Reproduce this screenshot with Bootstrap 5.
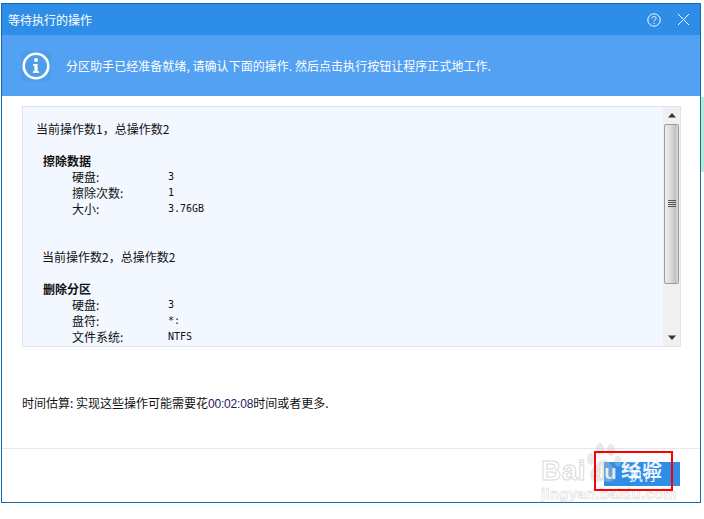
<!DOCTYPE html>
<html lang="zh">
<head>
<meta charset="utf-8">
<title>等待执行的操作</title>
<link href="https://cdn.jsdelivr.net/npm/bootstrap@5.3.0/dist/css/bootstrap.min.css" rel="stylesheet">
<style>
html,body{height:100%;background:#fff;overflow:hidden}
body{padding:3px 3px 0 1px;font:12px/16px "Noto Sans CJK SC","Liberation Sans",sans-serif;color:#111}
.win{width:700px;height:500px;border:1px solid #0f6cb5;background:#fff;position:relative}
.titlebar{height:31px;background:#2e8de6;color:#fff;padding:0 10px 0 6px}
.ttl{font-size:12px}
.tb-ico{display:block}
.banner{height:61px;background:#52a1f2;color:#fff;padding:0 0 0 19px;gap:15px}
.banner svg{flex:none}
.banner-text{font-size:12px;letter-spacing:.04px}
.logbox{margin:10px 19px 0 20px;height:241px;border:1px solid #dfe3ee;background:#f3f7ff;overflow:hidden}
.logtext{padding:14px 0 0 13px;overflow:hidden;min-width:0;height:100%}
.ln{height:16px;line-height:16px;white-space:nowrap}
.ln b{font-weight:700}
.sp1{height:16px}
.sp2{height:32px}
.h-row{padding-left:7px}
.k{display:inline-block;box-sizing:content-box;padding-left:36px;width:96px;vertical-align:top}
.v{display:inline-block;font:10px/16px "DejaVu Sans Mono","Liberation Mono",monospace;vertical-align:top}
.sec2{padding-left:6px}
.sbar{width:17px;flex:none;background:#f0f0f0;height:100%}
.sb-btn{height:17px}
.thumb{height:160px;margin:0 1px;border:1px solid #9a9a9a;border-radius:2px;background:linear-gradient(90deg,#f0f0f0,#d9d9d9 45%,#c2c2c2 80%,#dcdcdc)}
.est{margin:48px 0 0 20px;height:16px;white-space:nowrap}
.est i{font:12px/16px "Liberation Sans",sans-serif;font-style:normal;color:#1a1a66;letter-spacing:-.2px}
.foot{margin-top:37px;height:54px;border-top:1px solid #e3e9f0}
.go{margin:13px 20px 0 auto;width:76px;height:24px;background:#2e8de6;color:#fff;border:0;border-radius:0;padding:0 0 0 2px;font-size:14px;line-height:24px;display:block}
.redbox{position:absolute;left:594px;top:451px;width:79px;height:40px;border:2px solid #f00}
.sidestrip{position:absolute;left:701px;top:97px;width:3px;height:75px;background:#b5ecd0}
.wm{position:absolute;pointer-events:none;white-space:nowrap}
.wm-bai{left:541px;top:455px;font:700 28px/32px "Liberation Sans",sans-serif;color:rgba(255,255,255,.5);-webkit-text-stroke:1px rgba(190,190,190,.6);letter-spacing:.5px}
.wm-du{left:592px;top:461px;font:700 20px/22px "Liberation Sans",sans-serif;color:rgba(255,255,255,.85);-webkit-text-stroke:.6px rgba(170,170,170,.55)}
.wm-jing{left:621px;top:456px;font:700 20px/26px "Noto Sans CJK SC",sans-serif;color:rgba(255,255,255,.92);letter-spacing:1px}
.wm-url{left:541px;top:486px;font:700 15px/16px "Liberation Sans",sans-serif;color:rgba(255,255,255,.5);-webkit-text-stroke:.6px rgba(190,190,190,.6);letter-spacing:.25px}
.wm-paw{left:586px;top:443px}
</style>
</head>
<body>
<div class="sidestrip"></div>
<div class="win d-flex flex-column">
  <div class="titlebar d-flex align-items-center">
    <span class="ttl flex-grow-1">等待执行的操作</span>
    <svg class="tb-ico me-3" width="14" height="14" viewBox="0 0 14 14" fill="none" stroke="#fff"><circle cx="7" cy="7" r="6.2"/><path d="M5 5.4c0-1.2 1-1.9 2.1-1.9 1.2 0 2 .8 2 1.8 0 1.5-2.1 1.6-2.1 3.2"/><path d="M7 9.8v1.2"/></svg>
    <svg class="tb-ico" width="13" height="13" viewBox="0 0 13 13" fill="none" stroke="#fff"><path d="M1 1l11 11M12 1L1 12"/></svg>
  </div>
  <div class="banner d-flex align-items-center">
    <svg width="30" height="30" viewBox="0 0 30 30"><rect width="30" height="30" fill="#4d9de9"/><circle cx="15" cy="15" r="12.3" fill="none" stroke="#fff" stroke-width="2.6"/><circle cx="15" cy="9" r="2" fill="#fff"/><path d="M12 13h4.600v7.200h1.500V22h-6.200v-1.800H13.400v-5.400H12z" fill="#fff"/></svg>
    <span class="banner-text">分区助手已经准备就绪, 请确认下面的操作. 然后点击执行按钮让程序正式地工作.</span>
  </div>
  <div class="logbox d-flex">
    <div class="logtext flex-grow-1">
      <div class="ln">当前操作数1，总操作数2</div>
      <div class="sp1"></div>
      <div class="ln h-row"><b>擦除数据</b></div>
      <div class="ln"><span class="k">硬盘:</span><span class="v">3</span></div>
      <div class="ln"><span class="k">擦除次数:</span><span class="v">1</span></div>
      <div class="ln"><span class="k">大小:</span><span class="v">3.76GB</span></div>
      <div class="sp2"></div>
      <div class="ln sec2">当前操作数2，总操作数2</div>
      <div class="sp1"></div>
      <div class="ln h-row"><b>删除分区</b></div>
      <div class="ln"><span class="k">硬盘:</span><span class="v">3</span></div>
      <div class="ln"><span class="k">盘符:</span><span class="v">*:</span></div>
      <div class="ln"><span class="k">文件系统:</span><span class="v">NTFS</span></div>
    </div>
    <div class="sbar d-flex flex-column">
      <div class="sb-btn d-flex align-items-center justify-content-center"><svg width="8" height="5" viewBox="0 0 8 5"><path d="M4 0l4 4.500H0z" fill="#333"/></svg></div>
      <div class="thumb d-flex align-items-center justify-content-center"><svg width="8" height="8" viewBox="0 0 8 8" stroke="#555"><path d="M0 .5h8M0 2.500h8M0 4.500h8M0 6.500h8"/></svg></div>
      <div class="flex-grow-1"></div>
      <div class="sb-btn d-flex align-items-center justify-content-center"><svg width="8" height="5" viewBox="0 0 8 5"><path d="M4 5L8 .5H0z" fill="#333"/></svg></div>
    </div>
  </div>
  <div class="est">时间估算: 实现这些操作可能需要花<i>00:02:08</i>时间或者更多.</div>
  <div class="foot">
    <button type="button" class="btn go">执行</button>
  </div>
</div>
<svg class="wm wm-paw" width="36" height="42" viewBox="0 0 36 42" fill="rgba(200,200,200,.4)"><ellipse cx="5" cy="16" rx="4" ry="6"/><ellipse cx="14" cy="6" rx="4" ry="6"/><ellipse cx="25" cy="7" rx="4" ry="6"/><ellipse cx="32" cy="18" rx="3.500" ry="5.500"/><path d="M18 17c5 0 7 5 10 9 3 5 1 13-5 13-3 0-4-1-6-1s-4 1-7 1c-6 0-8-8-4-13 3-4 6-9 12-9z"/></svg>
<div class="wm wm-bai">Bai</div>
<div class="wm wm-du">du</div>
<div class="wm wm-jing">经验</div>
<div class="wm wm-url">jingyan.baidu.com</div>
<div class="redbox"></div>
<script src="https://cdn.jsdelivr.net/npm/bootstrap@5.3.0/dist/js/bootstrap.bundle.min.js"></script>
</body>
</html>
